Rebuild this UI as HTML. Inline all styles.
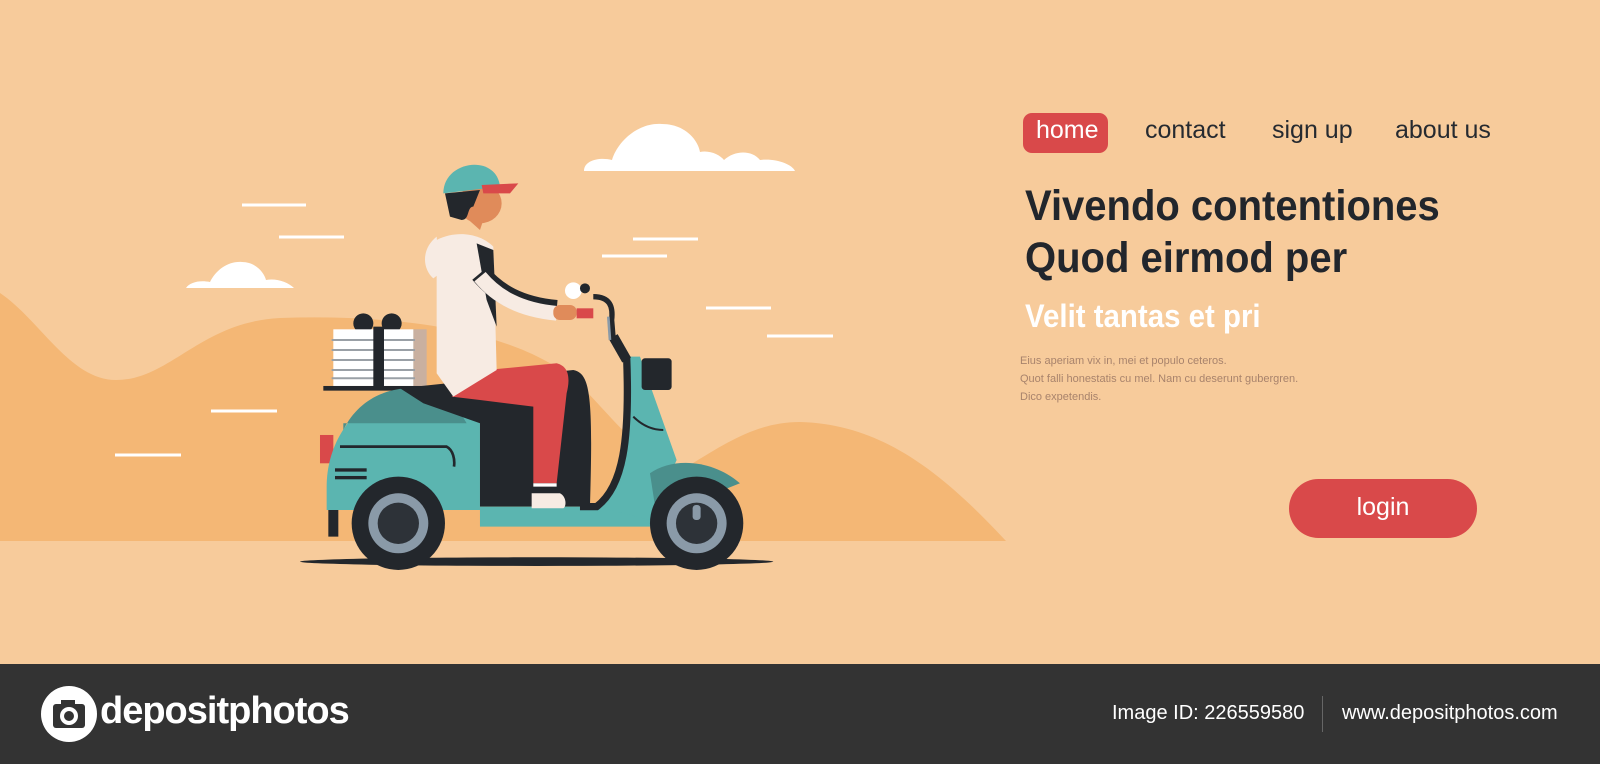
<!DOCTYPE html>
<html><head><meta charset="utf-8"><style>
*{margin:0;padding:0;box-sizing:border-box}
body{width:1600px;height:764px;overflow:hidden;background:#f7cb9b;font-family:"Liberation Sans",sans-serif;position:relative}
.abs{position:absolute;white-space:nowrap}
.nav{font-size:25px;color:#262a30;top:116px}
.sx{transform-origin:left top;display:inline-block}
</style></head><body>
<svg class="abs" style="left:0;top:0" width="1600" height="664" viewBox="0 0 1600 664">
<path d="M0,293 C40,320 70,380 116,380 C170,380 200,322 280,318 C400,314 520,330 580,385 C620,425 650,470 690,465 C730,440 760,422 800,422 C880,424 940,470 1006,541 L0,541 Z" fill="#f4b775"/>
<g fill="#fff">
<path d="M584,171 C584,160 600,157 612,160 C618,140 640,122 662,124 C685,124 698,140 700,152 C710,150 720,155 724,160 C735,150 752,150 760,160 C775,158 792,164 795,171 Z"/>
<path d="M186,288 C190,282 200,280 210,282 C216,270 228,261 242,262 C255,262 264,272 266,280 C276,278 288,282 294,288 Z"/>
</g>
<g stroke="#fff" stroke-width="3">
<line x1="242" y1="205" x2="306" y2="205"/><line x1="279" y1="237" x2="344" y2="237"/>
<line x1="633" y1="239" x2="698" y2="239"/><line x1="602" y1="256" x2="667" y2="256"/>
<line x1="706" y1="308" x2="771" y2="308"/><line x1="767" y1="336" x2="833" y2="336"/>
<line x1="211" y1="411" x2="277" y2="411"/><line x1="115" y1="455" x2="181" y2="455"/>
</g>
<g transform="translate(280,140) scale(0.3333)">
<ellipse cx="770" cy="1265" rx="710" ry="13" fill="#23272c"/>
<circle cx="250" cy="550" r="30" fill="#23272c"/><circle cx="335" cy="550" r="30" fill="#23272c"/>
<rect x="395" y="568" width="45" height="170" fill="#c9b0a0"/>
<rect x="160" y="568" width="240" height="170" fill="#fff"/>
<g stroke="#9aa0a6" stroke-width="6"><line x1="155" y1="600" x2="405" y2="600"/><line x1="155" y1="630" x2="405" y2="630"/><line x1="155" y1="660" x2="405" y2="660"/><line x1="155" y1="690" x2="405" y2="690"/><line x1="155" y1="715" x2="405" y2="715"/></g>
<rect x="280" y="560" width="32" height="182" fill="#23272c"/>
<rect x="130" y="738" width="300" height="14" fill="#23272c"/>
<rect x="120" y="885" width="40" height="85" fill="#d9494a"/>
<rect x="145" y="1040" width="30" height="150" fill="#23272c"/>
<path d="M140,1040 C140,900 230,770 380,745 L600,760 L600,1110 L140,1110 Z" fill="#5bb5b0"/>
<path d="M190,870 C230,790 300,750 380,745 L500,750 L560,850 L190,850 Z" fill="#4a8f8c"/>
<path d="M180,920 L500,920 C520,930 525,960 522,980" stroke="#23272c" stroke-width="8" fill="none"/>
<rect x="165" y="985" width="95" height="10" fill="#23272c"/><rect x="165" y="1008" width="95" height="10" fill="#23272c"/>
<path d="M360,745 L880,690 C930,700 940,760 930,1100 L600,1100 L600,850 L430,790 Z" fill="#23272c"/>
<rect x="600" y="1100" width="560" height="60" fill="#5bb5b0"/>
<path d="M1040,650 L1080,650 L1190,960 L1110,1140 L950,1100 C1030,1040 1050,900 1040,650 Z" fill="#5bb5b0"/>
<path d="M1040,650 C1050,900 1030,1040 950,1100 L900,1100" stroke="#23272c" stroke-width="22" fill="none"/>
<path d="M1060,830 C1090,860 1120,870 1150,870" stroke="#23272c" stroke-width="6" fill="none"/>
<path d="M1110,1000 C1180,950 1300,960 1380,1030 L1130,1130 Z" fill="#4a8f8c"/>
<rect x="1085" y="655" width="90" height="95" rx="10" fill="#23272c"/>
<path d="M1000,590 L1040,660" stroke="#23272c" stroke-width="30"/>
<path d="M940,470 C990,470 1000,500 995,540 L1000,600" stroke="#23272c" stroke-width="16" fill="none"/>
<path d="M985,530 L990,600" stroke="#8a9aa8" stroke-width="8"/>
<circle cx="880" cy="452" r="25" fill="#fff"/><circle cx="915" cy="445" r="15" fill="#23272c"/>
<circle cx="355" cy="1150" r="140" fill="#23272c"/><circle cx="355" cy="1150" r="90" fill="#8a9aa8"/><circle cx="355" cy="1150" r="62" fill="#2d3238"/>
<circle cx="1250" cy="1150" r="140" fill="#23272c"/><circle cx="1250" cy="1150" r="90" fill="#8a9aa8"/><circle cx="1250" cy="1150" r="62" fill="#2d3238"/>
<rect x="1238" y="1095" width="24" height="45" rx="10" fill="#8a9aa8"/>
<path d="M515,770 L620,690 L830,670 C870,680 870,720 860,760 L830,1030 L760,1030 L760,800 L600,780 Z" fill="#d9494a"/>
<rect x="760" y="1030" width="70" height="10" fill="#fff"/>
<path d="M755,1060 L840,1060 C860,1070 860,1100 850,1105 L755,1105 Z" fill="#f7ebe3"/>
<path d="M470,300 C530,270 600,280 640,320 L650,690 L520,770 L470,700 Z" fill="#f7ebe3"/>
<path d="M470,290 C420,330 430,390 460,415 L480,400 Z" fill="#f7ebe3"/>
<path d="M590,310 L640,330 L650,560 L620,480 Z" fill="#23272c"/>
<path d="M600,400 C650,460 720,500 830,510" stroke="#23272c" stroke-width="60" fill="none"/>
<path d="M600,410 C650,470 720,510 830,520" stroke="#f7ebe3" stroke-width="44" fill="none"/>
<rect x="820" y="495" width="70" height="45" rx="20" fill="#e08b5a"/>
<rect x="890" y="505" width="50" height="30" fill="#d9494a"/>
<path d="M555,230 L600,270 L610,240 Z" fill="#e08b5a"/>
<ellipse cx="600" cy="190" rx="65" ry="60" fill="#e08b5a"/>
<path d="M495,160 L600,150 L580,200 C560,200 570,240 545,240 L510,230 Z" fill="#23272c"/>
<path d="M490,160 C490,60 650,40 660,140 Z" fill="#5bb5b0"/>
<path d="M605,135 L715,130 L690,160 L610,160 Z" fill="#d9494a"/>
</g>
</svg>

<div class="abs" style="left:1023px;top:113px;width:85px;height:40px;background:#d9494a;border-radius:9px"></div>
<div class="abs nav" style="left:1036px;color:#fff">home</div>
<div class="abs nav" style="left:1145px">contact</div>
<div class="abs nav" style="left:1272px">sign up</div>
<div class="abs nav" style="left:1395px">about us</div>

<div class="abs" style="left:1025px;top:180px;font-size:43px;font-weight:bold;color:#22262c;line-height:52px"><span class="sx" style="transform:scaleX(0.93)">Vivendo contentiones<br>Quod eirmod per</span></div>
<div class="abs" style="left:1025px;top:298px;font-size:32px;font-weight:bold;color:#fff"><span class="sx" style="transform:scaleX(0.92)">Velit tantas et pri</span></div>
<div class="abs" style="left:1020px;top:352px;font-size:11px;color:#a8836c;line-height:18px">Eius aperiam vix in, mei et populo ceteros.<br>Quot falli honestatis cu mel. Nam cu deserunt gubergren.<br>Dico expetendis.</div>

<div class="abs" style="left:1289px;top:479px;width:188px;height:59px;background:#d9494a;border-radius:30px;color:#fff;font-size:25px;text-align:center;line-height:57px">login</div>

<div class="abs" style="left:0;top:664px;width:1600px;height:100px;background:#333"></div>
<svg class="abs" style="left:41px;top:686px" width="56" height="56" viewBox="0 0 56 56"><circle cx="28" cy="28" r="28" fill="#fff"/><rect x="12" y="18" width="32" height="24" rx="3" fill="#333"/><rect x="20" y="14" width="14" height="6" fill="#333"/><circle cx="28" cy="30" r="9" fill="#fff"/><circle cx="28" cy="30" r="5" fill="#333"/></svg>
<div class="abs" style="left:100px;top:690px;font-size:38px;font-weight:bold;color:#fff;letter-spacing:-1px">depositphotos</div>
<div class="abs" style="left:1112px;top:702px;font-size:20px;color:#fff">Image ID: 226559580</div>
<div class="abs" style="left:1322px;top:696px;width:1px;height:36px;background:#666"></div>
<div class="abs" style="left:1342px;top:702px;font-size:20px;color:#fff">www.depositphotos.com</div>
</body></html>
